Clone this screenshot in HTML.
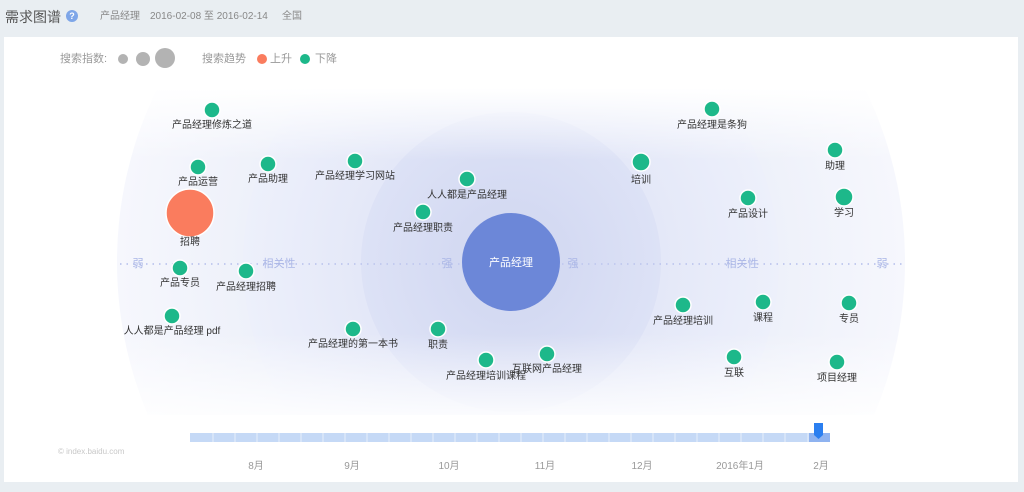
<!DOCTYPE html>
<html><head><meta charset="utf-8"><style>
*{margin:0;padding:0}
html,body{width:1024px;height:492px;overflow:hidden}
body{background:#e9eef2;position:relative;font-family:"Liberation Sans","Noto Sans CJK SC",sans-serif}
.t{position:absolute;white-space:nowrap;font-size:10px;color:#333;transform:translateX(-50%);line-height:12px}
.h{position:absolute;white-space:nowrap;line-height:14px}
.ax{position:absolute;font-size:11px;color:#aab6e6;transform:translateX(-50%);line-height:12px}
.m{position:absolute;font-size:10px;color:#999;transform:translateX(-50%);top:461px;line-height:12px}
</style></head><body>
<div class="h" style="left:5px;top:8px;font-size:14px;color:#555;line-height:18px">需求图谱</div>
<div style="position:absolute;left:66px;top:10px;width:12px;height:12px;border-radius:50%;background:#7ea6e8;color:#fff;font-size:9px;text-align:center;line-height:12px;font-weight:bold">?</div>
<div class="h" style="left:100px;top:10px;font-size:10px;color:#888">产品经理</div>
<div class="h" style="left:150px;top:10px;font-size:10px;color:#888">2016-02-08 至 2016-02-14</div>
<div class="h" style="left:282px;top:10px;font-size:10px;color:#888">全国</div>
<div style="position:absolute;left:4px;top:37px;width:1014px;height:445px;background:#fff"></div>
<svg style="position:absolute;left:0;top:0" width="1024" height="492">
<defs>
<clipPath id="c"><rect x="4" y="88" width="1014" height="327"/></clipPath>
<radialGradient id="g1" cx="511" cy="262" r="394" gradientUnits="userSpaceOnUse"><stop offset="0.68" stop-color="#eef1fa"/><stop offset="1" stop-color="#f6f7fd"/></radialGradient>
<radialGradient id="g2" cx="511" cy="262" r="268" gradientUnits="userSpaceOnUse"><stop offset="0.56" stop-color="#e4e8f8"/><stop offset="1" stop-color="#edf0fb"/></radialGradient>
<radialGradient id="g3" cx="511" cy="262" r="150" gradientUnits="userSpaceOnUse"><stop offset="0.3" stop-color="#d3d9f2"/><stop offset="1" stop-color="#dde2f6"/></radialGradient>
<linearGradient id="v" x1="0" y1="88" x2="0" y2="415" gradientUnits="userSpaceOnUse">
<stop offset="0" stop-color="#fff" stop-opacity="1"/><stop offset="0.22" stop-color="#fff" stop-opacity="0"/>
<stop offset="0.75" stop-color="#fff" stop-opacity="0"/><stop offset="1" stop-color="#fff" stop-opacity="0.85"/></linearGradient>
</defs>
<g clip-path="url(#c)">
<circle cx="511" cy="262" r="394" fill="url(#g1)"/>
<circle cx="511" cy="262" r="268" fill="url(#g2)"/>
<circle cx="511" cy="262" r="150" fill="url(#g3)"/>
<rect x="4" y="88" width="1014" height="327" fill="url(#v)"/>
</g>
<line x1="120" y1="264" x2="905" y2="264" stroke="#c3cbef" stroke-width="2" stroke-dasharray="1.5 5"/>
<circle cx="511" cy="262" r="49" fill="#6c87d8"/>
<circle cx="123" cy="59" r="5" fill="#b3b3b3"/><circle cx="143" cy="59" r="7" fill="#b3b3b3"/><circle cx="165" cy="58" r="10" fill="#b3b3b3"/>
<circle cx="262" cy="59" r="5" fill="#fa7c5e"/><circle cx="305" cy="59" r="5" fill="#1db88a"/>
<circle cx="190" cy="213" r="24" fill="#fa7c5e" stroke="#fff" stroke-width="1.5"/>
<g fill="#1db88a" stroke="#fff" stroke-width="1.5">
<circle cx="212" cy="110" r="8"/><circle cx="198" cy="167" r="8"/><circle cx="268" cy="164" r="8"/><circle cx="355" cy="161" r="8"/>
<circle cx="467" cy="179" r="8"/><circle cx="423" cy="212" r="8"/><circle cx="180" cy="268" r="8"/><circle cx="246" cy="271" r="8"/>
<circle cx="172" cy="316" r="8"/><circle cx="353" cy="329" r="8"/><circle cx="438" cy="329" r="8"/><circle cx="486" cy="360" r="8"/>
<circle cx="547" cy="354" r="8"/><circle cx="712" cy="109" r="8"/><circle cx="641" cy="162" r="9"/><circle cx="835" cy="150" r="8"/>
<circle cx="748" cy="198" r="8"/><circle cx="844" cy="197" r="9"/><circle cx="683" cy="305" r="8"/><circle cx="763" cy="302" r="8"/>
<circle cx="849" cy="303" r="8"/><circle cx="734" cy="357" r="8"/><circle cx="837" cy="362" r="8"/>
</g>
<rect x="190" y="433" width="640" height="9" fill="#c5d9f6"/>
<g stroke="#e6eefb" stroke-width="1">
<path d="M213 433v9M235 433v9M257 433v9M279 433v9M301 433v9M323 433v9M345 433v9M367 433v9M389 433v9M411 433v9M433 433v9M455 433v9M477 433v9M499 433v9M521 433v9M543 433v9M565 433v9M587 433v9M609 433v9M631 433v9M653 433v9M675 433v9M697 433v9M719 433v9M741 433v9M763 433v9M785 433v9M808 433v9"/>
</g>
<rect x="809" y="433" width="21" height="9" fill="#8fb3f0"/>
<path d="M814 423h9v12l-4.5 4l-4.5-4z" fill="#2b7ff0"/>
</svg>
<div class="h" style="left:60px;top:52px;font-size:11px;color:#999">搜索指数:</div>
<div class="h" style="left:202px;top:52px;font-size:11px;color:#999">搜索趋势</div>
<div class="h" style="left:270px;top:52px;font-size:11px;color:#999">上升</div>
<div class="h" style="left:315px;top:52px;font-size:11px;color:#999">下降</div>
<div class="t" style="left:511px;top:257px;color:#fff;font-size:11px">产品经理</div>
<div class="ax" style="left:138px;top:258px">弱</div>
<div class="ax" style="left:279px;top:258px">相关性</div>
<div class="ax" style="left:447px;top:258px">强</div>
<div class="ax" style="left:573px;top:258px">强</div>
<div class="ax" style="left:742px;top:258px">相关性</div>
<div class="ax" style="left:882px;top:258px">弱</div>
<div class="t" style="left:212px;top:120px">产品经理修炼之道</div>
<div class="t" style="left:198px;top:177px">产品运营</div>
<div class="t" style="left:268px;top:174px">产品助理</div>
<div class="t" style="left:355px;top:171px">产品经理学习网站</div>
<div class="t" style="left:467px;top:190px">人人都是产品经理</div>
<div class="t" style="left:423px;top:223px">产品经理职责</div>
<div class="t" style="left:190px;top:237px">招聘</div>
<div class="t" style="left:180px;top:278px">产品专员</div>
<div class="t" style="left:246px;top:282px">产品经理招聘</div>
<div class="t" style="left:172px;top:326px">人人都是产品经理 pdf</div>
<div class="t" style="left:353px;top:339px">产品经理的第一本书</div>
<div class="t" style="left:438px;top:340px">职责</div>
<div class="t" style="left:486px;top:371px">产品经理培训课程</div>
<div class="t" style="left:547px;top:364px">互联网产品经理</div>
<div class="t" style="left:712px;top:120px">产品经理是条狗</div>
<div class="t" style="left:641px;top:175px">培训</div>
<div class="t" style="left:835px;top:161px">助理</div>
<div class="t" style="left:748px;top:209px">产品设计</div>
<div class="t" style="left:844px;top:208px">学习</div>
<div class="t" style="left:683px;top:316px">产品经理培训</div>
<div class="t" style="left:763px;top:313px">课程</div>
<div class="t" style="left:849px;top:314px">专员</div>
<div class="t" style="left:734px;top:368px">互联</div>
<div class="t" style="left:837px;top:373px">项目经理</div>
<div class="h" style="left:58px;top:447px;font-size:8px;color:#c8c8c8;line-height:10px">© index.baidu.com</div>
<div class="m" style="left:256px">8月</div>
<div class="m" style="left:352px">9月</div>
<div class="m" style="left:449px">10月</div>
<div class="m" style="left:545px">11月</div>
<div class="m" style="left:642px">12月</div>
<div class="m" style="left:740px">2016年1月</div>
<div class="m" style="left:821px">2月</div>
</body></html>
